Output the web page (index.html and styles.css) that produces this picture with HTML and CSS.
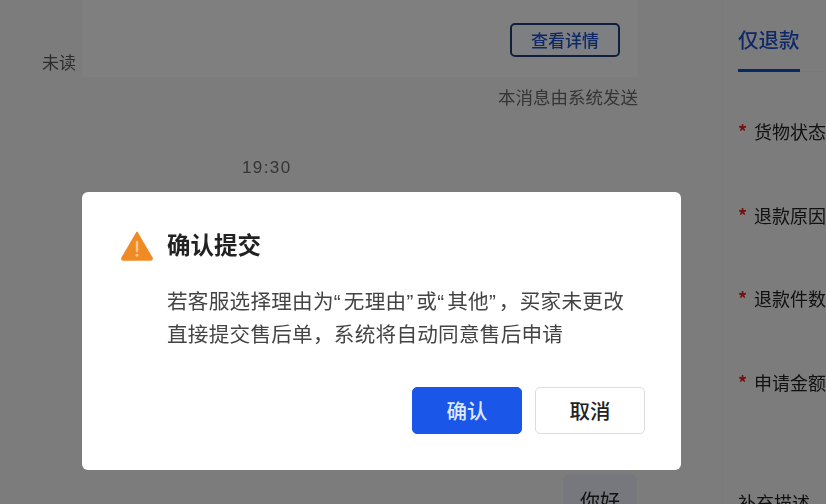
FILE: index.html
```html
<!DOCTYPE html>
<html lang="zh-CN">
<head>
<meta charset="utf-8">
<title>确认提交</title>
<link rel="stylesheet" href="styles.css">
</head>
<body>
<div class="page">
  <main class="chat">
    <div class="msg-row">
      <span class="unread">未读</span>
      <div class="card"><button class="detail-btn">查看详情</button></div>
    </div>
    <div class="sys-note">本消息由系统发送</div>
    <div class="time">19:30</div>
    <div class="divider"></div>
    <div class="bubble">你好</div>
  </main>
  <aside class="side">
    <div class="tabs"><span class="tab">仅退款</span></div>
    <div class="fields">
      <div class="field"><span class="star">*</span>货物状态</div>
      <div class="field"><span class="star">*</span>退款原因</div>
      <div class="field"><span class="star">*</span>退款件数</div>
      <div class="field"><span class="star">*</span>申请金额</div>
      <div class="field plain">补充描述</div>
    </div>
  </aside>
  <div class="scrim"></div>
  <section class="modal">
    <header class="modal-head">
      <svg class="warn" viewBox="0 0 32 30" width="32" height="30" aria-hidden="true">
        <path d="M16 1.5 L31 27 Q31.4 29 29.5 29 L2.5 29 Q.6 29 1 27 Z" fill="#f08a24" stroke="#f08a24" stroke-width="1.5" stroke-linejoin="round"/>
        <path d="M16 11 V20" stroke="#f9c88c" stroke-width="2.4" stroke-linecap="round"/>
        <circle cx="16" cy="24.2" r="1.5" fill="#f9c88c"/>
      </svg>
      <h1 class="title">确认提交</h1>
    </header>
    <p class="body-text">若客服选择理由为<span class="q">“</span>无理由<span class="q">”</span>或<span class="q">“</span>其他<span class="q">”</span>，买家未更改<br>直接提交售后单，系统将自动同意售后申请</p>
    <footer class="actions">
      <button class="btn primary">确认</button>
      <button class="btn">取消</button>
    </footer>
  </section>
</div>
</body>
</html>
```
FILE: styles.css
```css
* { box-sizing: border-box; }
html, body { margin: 0; padding: 0; }
body { font-family: "Noto Sans CJK SC", "Liberation Sans", sans-serif; }
.page {
  position: relative;
  width: 826px;
  height: 504px;
  overflow: hidden;
  display: flex;
  background: #eeeef0;
}
.chat { width: 722px; flex: none; display: flex; flex-direction: column; filter: blur(.7px); }
.msg-row { display: flex; align-items: flex-end; padding-left: 42px; height: 77px; }
.unread { width: 40px; font-size: 17px; line-height: 24px; color: #555; margin-bottom: 3px; }
.card {
  width: 556px;
  height: 77px;
  background: #f4f4f6;
  display: flex;
  justify-content: flex-end;
  padding: 23px 18px 0 0;
}
.detail-btn {
  width: 110px;
  height: 34px;
  padding: 0 0 2px;
  border: 2px solid #1c3f78;
  border-radius: 5px;
  background: #f0f4fc;
  color: #1d4fc4;
  font: 500 17px/1 "Noto Sans CJK SC", sans-serif;
}
.sys-note {
  width: 638px;
  margin-top: 8px;
  text-align: right;
  font-size: 17.5px;
  line-height: 24px;
  color: #666;
}
.time {
  margin: 47px 0 0 242px;
  font-size: 17px;
  line-height: 24px;
  letter-spacing: 1.4px;
  color: #666;
  font-family: "Liberation Sans", sans-serif;
}
.divider { height: 1px; margin-top: 75px; background: #e2e2e4; }
.bubble {
  width: 74px;
  height: 60px;
  margin: 219px 0 0 563px;
  padding-top: 13px;
  text-align: center;
  background: #e2e7f2;
  border-radius: 6px;
  font-size: 20px;
  line-height: 28px;
  color: #222;
}
.side { flex: 1; min-width: 0; padding-left: 15px; border-left: 1px solid #e8e8ea; filter: blur(.7px); }
.tabs { height: 72px; padding-top: 24px; border-bottom: 1px solid #e6e6e8; }
.tab {
  display: block;
  width: 62px;
  height: 48px;
  font-size: 20.5px;
  line-height: 30px;
  font-weight: 500;
  color: #1d4fc4;
  border-bottom: 3px solid #0d50c0;
}
.fields { padding-top: 44px; }
.field {
  height: 83.5px;
  font-size: 18px;
  line-height: 30px;
  color: #222;
  white-space: nowrap;
}
.field.plain { margin-top: 37px; }
.star { display: inline-block; width: 16px; color: #e02020; font-weight: 700; }
.scrim { position: absolute; inset: 0; background: rgba(0, 0, 0, .48); }
.modal {
  position: absolute;
  left: 82px;
  top: 192px;
  width: 599px;
  height: 278px;
  background: #fff;
  border-radius: 6px;
  padding: 39px 36px 0 39px;
  display: flex;
  flex-direction: column;
}
.modal-head { display: flex; align-items: flex-start; gap: 14px; height: 32px; }
.warn { flex: none; }
.title { margin: -3px 0 0; font-size: 23.5px; line-height: 32px; font-weight: 700; color: #222; filter: blur(.5px); }
.body-text {
  margin: 22px 0 0 46px;
  font-family: "Liberation Sans", "Noto Sans CJK SC", sans-serif;
  font-size: 20.6px;
  line-height: 33px;
  letter-spacing: .26px;
  color: #444;
  white-space: nowrap;
  filter: blur(.5px);
}
.q { letter-spacing: 3.1px; }
.actions { display: flex; justify-content: flex-end; gap: 13px; margin-top: 36px; }
.btn {
  width: 110px;
  height: 47px;
  padding: 0;
  border: 1px solid #dcdce0;
  border-radius: 5px;
  background: #fff;
  color: #222;
  font: 500 20.5px/1 "Noto Sans CJK SC", sans-serif;
}
.btn.primary { background: #1a56e8; border-color: #1a56e8; color: #dfe8fb; }
```
